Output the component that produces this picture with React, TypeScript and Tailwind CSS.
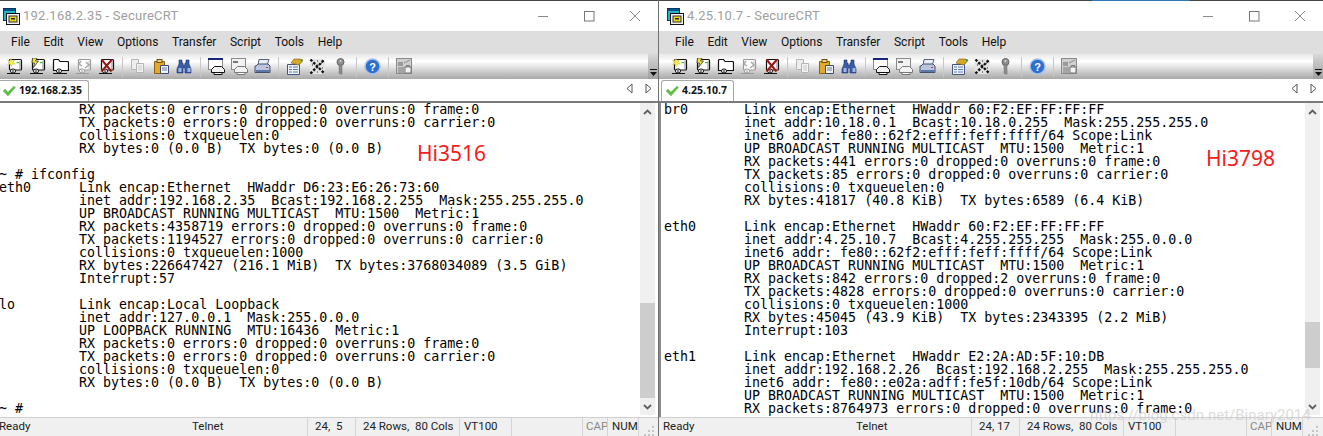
import React from "react";

const mono = "font-['DejaVu_Sans_Mono',monospace]";

const leftRows = [
  "          RX packets:0 errors:0 dropped:0 overruns:0 frame:0",
  "          TX packets:0 errors:0 dropped:0 overruns:0 carrier:0",
  "          collisions:0 txqueuelen:0",
  "          RX bytes:0 (0.0 B)  TX bytes:0 (0.0 B)",
  "",
  "~ # ifconfig",
  "eth0      Link encap:Ethernet  HWaddr D6:23:E6:26:73:60",
  "          inet addr:192.168.2.35  Bcast:192.168.2.255  Mask:255.255.255.0",
  "          UP BROADCAST RUNNING MULTICAST  MTU:1500  Metric:1",
  "          RX packets:4358719 errors:0 dropped:0 overruns:0 frame:0",
  "          TX packets:1194527 errors:0 dropped:0 overruns:0 carrier:0",
  "          collisions:0 txqueuelen:1000",
  "          RX bytes:226647427 (216.1 MiB)  TX bytes:3768034089 (3.5 GiB)",
  "          Interrupt:57",
  "",
  "lo        Link encap:Local Loopback",
  "          inet addr:127.0.0.1  Mask:255.0.0.0",
  "          UP LOOPBACK RUNNING  MTU:16436  Metric:1",
  "          RX packets:0 errors:0 dropped:0 overruns:0 frame:0",
  "          TX packets:0 errors:0 dropped:0 overruns:0 carrier:0",
  "          collisions:0 txqueuelen:0",
  "          RX bytes:0 (0.0 B)  TX bytes:0 (0.0 B)",
  "",
  "~ #",
];

const rightRows = [
  "br0       Link encap:Ethernet  HWaddr 60:F2:EF:FF:FF:FF",
  "          inet addr:10.18.0.1  Bcast:10.18.0.255  Mask:255.255.255.0",
  "          inet6 addr: fe80::62f2:efff:feff:ffff/64 Scope:Link",
  "          UP BROADCAST RUNNING MULTICAST  MTU:1500  Metric:1",
  "          RX packets:441 errors:0 dropped:0 overruns:0 frame:0",
  "          TX packets:85 errors:0 dropped:0 overruns:0 carrier:0",
  "          collisions:0 txqueuelen:0",
  "          RX bytes:41817 (40.8 KiB)  TX bytes:6589 (6.4 KiB)",
  "",
  "eth0      Link encap:Ethernet  HWaddr 60:F2:EF:FF:FF:FF",
  "          inet addr:4.25.10.7  Bcast:4.255.255.255  Mask:255.0.0.0",
  "          inet6 addr: fe80::62f2:efff:feff:ffff/64 Scope:Link",
  "          UP BROADCAST RUNNING MULTICAST  MTU:1500  Metric:1",
  "          RX packets:842 errors:0 dropped:2 overruns:0 frame:0",
  "          TX packets:4828 errors:0 dropped:0 overruns:0 carrier:0",
  "          collisions:0 txqueuelen:1000",
  "          RX bytes:45045 (43.9 KiB)  TX bytes:2343395 (2.2 MiB)",
  "          Interrupt:103",
  "",
  "eth1      Link encap:Ethernet  HWaddr E2:2A:AD:5F:10:DB",
  "          inet addr:192.168.2.26  Bcast:192.168.2.255  Mask:255.255.255.0",
  "          inet6 addr: fe80::e02a:adff:fe5f:10db/64 Scope:Link",
  "          UP BROADCAST RUNNING MULTICAST  MTU:1500  Metric:1",
  "          RX packets:8764973 errors:0 dropped:0 overruns:0 frame:0",
];

function AppIcon() {
  return (
    <svg width="17" height="17" viewBox="0 0 17 17" className="shrink-0">
      <rect x="0.5" y="0.5" width="12" height="12" fill="#22b5c9" stroke="#003a66" />
      <rect x="1" y="1" width="11" height="2" fill="#0b4f8a" />
      <rect x="3.5" y="5.5" width="13" height="11" fill="#f2f2f2" stroke="#111" />
      <rect x="6" y="8" width="8" height="6" fill="#e8d820" stroke="#333" />
      <rect x="8" y="10" width="4" height="1.5" fill="#222" />
    </svg>
  );
}

function Base({ gray }: { gray?: boolean }) {
  const s = gray ? "#9a9a9a" : "#111";
  return (
    <g>
      <rect x="3.5" y="1.5" width="12" height="10.5" rx="1" fill="#fff" stroke={s} strokeWidth="1.2" />
      <path d="M14 3v8" stroke={gray ? "#ccc" : "#9a9a9a"} strokeWidth="1.2" />
      <rect x="4.5" y="11" width="5" height="4" rx="2" fill="#fff" stroke={s} />
      <path d="M7 11.500v3.500M1 15.500h13" stroke={s} />
    </g>
  );
}

const Svg = ({ children }: { children: React.ReactNode }) => (
  <svg width="17" height="17" viewBox="0 0 17 17" className="shrink-0">{children}</svg>
);

const icons: Record<string, React.ReactNode> = {
  star: <Svg><Base /><path d="M5 .5l.8 2.500L8.500 2 7 4.500 9.500 6 6.500 6l-1 2.500L4.500 6 1.500 6.500 3.500 4.500 1.500 2 4 3z" fill="#f6ee50" stroke="#c9c23a" strokeWidth=".5" /><rect x="10.500" y="4" width="2.500" height="1.200" fill="#35c435" /></Svg>,
  bolt: <Svg><Base /><path d="M3.500 0h4.500L6.500 3h3L4.500 9.500 5.500 5H3z" fill="#f6e838" stroke="#222" strokeWidth=".7" /><rect x="11" y="4" width="2.500" height="1.200" fill="#35c435" /></Svg>,
  folder: <Svg><path d="M1.500 12.500v-10q0-1 1-1h4l1.500 2h7.500q1 0 1 1v8z" fill="#fff" stroke="#111" strokeWidth="1.200" /><rect x="4.500" y="11" width="5" height="4" rx="2" fill="#fff" stroke="#111" /><path d="M7 11.500v3.500M1 15.500h14" stroke="#111" /></Svg>,
  grayS: <Svg><Base gray /><path d="M6 3l-2 3 3 2M11 4l3 3-4 3" fill="none" stroke="#a8a8a8" strokeWidth="1.500" /></Svg>,
  x: <Svg><Base /><path d="M3.500 1.500l10 12M14 1.500l-10.500 12" stroke="#a01515" strokeWidth="2" /></Svg>,
  copy: <Svg><path d="M1.500 1.500h7v10h-7z" fill="#eee" stroke="#b5b5b5" /><path d="M6.500 5.500h7v9h-7z" fill="#f4f4f4" stroke="#b5b5b5" /><path d="M8 8h4M8 10h4M8 12h4" stroke="#c8c8c8" /></Svg>,
  paste: <Svg><path d="M1.500 3.500h10v12h-10z" fill="#e2a92c" stroke="#8a6414" /><rect x="4" y="1.500" width="5" height="3" fill="#f0d070" stroke="#6a5010" /><path d="M7.500 7.500h8v8h-8z" fill="#eef3fb" stroke="#3a4a72" /><path d="M9 10h5M9 12h5" stroke="#6a7ca8" /></Svg>,
  binoc: <Svg><path d="M3 2h3v3h1v2h2V5h1V2h3v4l2 5v4h-6v-5H7v5H1v-4l2-5z" fill="#3a5da8" stroke="#1d2f66" strokeWidth=".6" /><rect x="2.500" y="10" width="3" height="4" fill="#9db8e8" /><rect x="11.500" y="10" width="3" height="4" fill="#9db8e8" /></Svg>,
  winP: <Svg><rect x=".5" y=".5" width="14" height="11" fill="#fff" stroke="#8a8a8a" /><rect x="0" y="0" width="15" height="2" fill="#17247a" /><path d="M6.500 8.500h7l3 3v3h-13v-3z" fill="#f2f2f2" stroke="#111" /><path d="M6 14.500h8v2H6z" fill="#fff" stroke="#111" /></Svg>,
  winG: <Svg><rect x=".5" y=".5" width="14" height="11" fill="#f2f2f2" stroke="#8a8a8a" /><rect x="2" y="3" width="5" height="2" fill="#777" /><path d="M6.500 8.500h7l3 3v3h-13v-3z" fill="#f2f2f2" stroke="#777" /><path d="M6 14.500h8v2H6z" fill="#fff" stroke="#777" /></Svg>,
  printer: <Svg><path d="M5 1.500h10l-2 6H4z" fill="#e9eef7" stroke="#55617c" /><path d="M2 8l2-2h10l2 2v6.500H1V8z" fill="#b8c6df" stroke="#44506c" /><rect x="2" y="12" width="14" height="2" fill="#5d78a8" /><rect x="12" y="9" width="2" height="1" fill="#d33" /></Svg>,
  prop: <Svg><path d="M1.500 6.500h12v10h-12z" fill="#eef3fb" stroke="#40557f" /><path d="M3 9h3M7 9h5M3 11.500h3M7 11.500h5M3 14h3M7 14h5" stroke="#5a78a8" /><path d="M5 5l3-4h6l3 1-2 3-3 2-3-1z" fill="#d7a92a" stroke="#7c5c10" strokeWidth=".6" /><path d="M14 1l3 1-1 2z" fill="#2f9a3a" /></Svg>,
  tools: <Svg><path d="M1 4L4 1h9l3 3v9l-3 3H4l-3-3z" fill="#e4e4e4" /><path d="M1.500 15.500L15.500 1.500M1.500 1.500l14 14" stroke="#111" strokeWidth="2.400" strokeDasharray="2.500 1.500" /><path d="M3 7h1M5 11h1M12 5h1M13 10h1M8 3h1M8 14h1" stroke="#222" strokeWidth="1.200" /></Svg>,
  key: <Svg><circle cx="8.500" cy="4" r="3.500" fill="#8f8f8f" stroke="#666" /><path d="M7 7h3v9H8l-1-1v-2h1v-1H7z" fill="#8f8f8f" stroke="#666" strokeWidth=".5" /><circle cx="8.500" cy="3" r="1" fill="#ddd" /></Svg>,
  help: <Svg><circle cx="8.500" cy="8.500" r="7.500" fill="#2c6fd0" stroke="#a5c2ea" strokeWidth="1.500" /><text x="8.500" y="12.500" textAnchor="middle" fontSize="11" fontWeight="700" fill="#fff" fontFamily="Liberation Sans">?</text></Svg>,
  lock: <Svg><rect x=".5" y=".5" width="15" height="15" fill="#cfcfcf" stroke="#8a8a8a" /><path d="M2 4h5v4H2z" fill="#9a9a9a" /><path d="M8 5l6-3M2 12l5-3" stroke="#8f8f8f" /><rect x="2" y="9" width="6" height="6" fill="#a5a5a5" /><rect x="9" y="9" width="6" height="6" fill="#f4f4f4" stroke="#777" /><path d="M10.500 9V7.500h3V9" fill="none" stroke="#777" /></Svg>,
};

const groups: string[][] = [
  ["star", "bolt", "folder", "grayS", "x"],
  ["copy", "paste", "binoc"],
  ["winP", "winG", "printer"],
  ["prop", "tools", "key"],
  ["help"],
  ["lock"],
];

function Toolbar({ inset }: { inset: string }) {
  return (
    <div className={`relative flex h-[25px] shrink-0 items-center bg-gradient-to-b from-[#e8e8e8] via-[#ffffff] via-30% to-[#a9a9a9] ${inset}`}>
      {groups.map((g, i) => (
        <React.Fragment key={i}>
          {i > 0 && <div className="mx-[7px] h-[20px] w-px bg-[#c8c8c8]" />}
          <div className="flex gap-[6px]">
            {g.map((n) => (
              <span key={n} className="block h-[17px] w-[17px]">{icons[n]}</span>
            ))}
          </div>
        </React.Fragment>
      ))}
      <div className="absolute right-0 top-0 flex h-full w-[10px] items-end justify-center bg-gradient-to-b from-[#d8d8d8] to-[#a0a0a0] pb-[3px]">
        <svg width="7" height="7" viewBox="0 0 7 7"><path d="M0 0h7v1H0zM0 3h7L3.500 7z" fill="#111" /></svg>
      </div>
    </div>
  );
}

function Scrollbar({ top, height }: { top: number; height: number }) {
  return (
    <div className="relative mb-[2px] mr-[3px] w-[15px] shrink-0 bg-[#f0f0f0]">
      <svg className="absolute left-[3px] top-[6px]" width="9" height="6" viewBox="0 0 9 6"><path d="M1 5L4.500 1.500 8 5" fill="none" stroke="#606060" strokeWidth="1.800" /></svg>
      <div className="absolute left-0 w-[15px] bg-[#cdcdcd]" style={{ top, height }} />
      <svg className="absolute bottom-[5px] left-[3px]" width="9" height="6" viewBox="0 0 9 6"><path d="M1 1L4.500 4.500 8 1" fill="none" stroke="#606060" strokeWidth="1.800" /></svg>
    </div>
  );
}

function Grip() {
  return (
    <svg width="11" height="11" viewBox="0 0 11 11" className="ml-[5px] mt-[6px] shrink-0">
      <path d="M8 1h2v2H8zM8 5h2v2H8zM4 5h2v2H4zM8 9h2v2H8zM4 9h2v2H4zM0 9h2v2H0z" fill="#c4c4c4" />
    </svg>
  );
}

type PaneProps = {
  title: string; rows: string[]; pos: string; thumbTop: number; thumbH: number;
  label: string; labelLeft: number; labelTop: number;
  wide: string; titleInset: string; menuInset: string; toolInset: string; tabInset: string;
  statusInset: string; termClass: string; textLeft: number;
};

function Pane(p: PaneProps) {
  const menu = ["File", "Edit", "View", "Options", "Transfer", "Script", "Tools", "Help"];
  return (
    <div className={`relative flex h-full shrink-0 flex-col ${p.wide}`}>
      <div className={`flex h-[31px] shrink-0 items-center border-t border-[#444] bg-white ${p.titleInset}`}>
        <AppIcon />
        <span className="ml-[3px] whitespace-pre font-['Roboto',sans-serif] text-[13px] tracking-[0.25px] text-[#a0a0a0]">{p.title} - SecureCRT</span>
        <div className="ml-auto flex h-full items-center pr-[17px]">
          <svg width="12" height="12" viewBox="0 0 12 12" className="mr-[34px]"><path d="M1 6.500h10" stroke="#8a8a8a" /></svg>
          <svg width="12" height="12" viewBox="0 0 12 12" className="mr-[34px]"><rect x="1.500" y="1.500" width="9.500" height="9.500" fill="none" stroke="#777" /></svg>
          <svg width="12" height="12" viewBox="0 0 12 12"><path d="M1 1l10 10M11 1L1 11" stroke="#8a8a8a" /></svg>
        </div>
      </div>
      <div className={`flex h-[23px] shrink-0 items-center gap-[13.600px] bg-[#dedede] pb-[1px] font-['Roboto',sans-serif] text-[12px] text-[#111] ${p.menuInset}`}>
        {menu.map((m) => <span key={m}>{m}</span>)}
      </div>
      <Toolbar inset={p.toolInset} />
      <div className={`relative flex h-[22px] shrink-0 items-end bg-white ${p.tabInset}`}>
        <div className="flex h-[21px] items-center rounded-t-[3px] border border-b-0 border-[#a8a8a8] bg-white pl-[3px] pr-[6px] font-['Open_Sans',sans-serif] text-[10.500px] font-bold text-[#111]">
          <svg width="14" height="12" viewBox="0 0 14 12" className="mr-[3px]"><path d="M1 6l2-2 3 3 6-6 1.500 1.500L6 11z" fill="#5cc043" stroke="#7fbf70" strokeWidth=".5" /></svg>
          {p.title}
        </div>
        <div className="absolute right-[6px] top-[4px] flex gap-[12px]">
          <svg width="7" height="11" viewBox="0 0 7 11"><path d="M6 1v9L1 5.500z" fill="#fff" stroke="#555" /></svg>
          <svg width="7" height="11" viewBox="0 0 7 11"><path d="M1 1v9l5-4.500z" fill="#fff" stroke="#555" /></svg>
        </div>
      </div>
      <div className="h-[2px] shrink-0 bg-[#7a7a7a]" />
      <div className={`relative flex h-[314px] shrink-0 overflow-hidden bg-white ${p.termClass}`}>
        <div className="min-w-0 flex-1 overflow-hidden">
          <pre
            className={`${mono} text-[13.300px] leading-[13px] text-black`}
            style={{ marginLeft: p.textLeft }}
          >
            {p.rows.join("\n")}
          </pre>
        </div>
        <Scrollbar top={p.thumbTop} height={p.thumbH} />
        <span
          className="absolute font-['Noto_Sans',sans-serif] text-[21px] leading-none text-[#f5201c]"
          style={{ left: p.labelLeft, top: p.labelTop }}
        >
          {p.label}
        </span>
      </div>
      <div className={`flex h-[19px] shrink-0 items-center whitespace-pre border-t border-[#cfcfcf] bg-[#f0f0f0] font-['Roboto',sans-serif] text-[11.500px] text-[#222] ${p.statusInset}`}>
        <span className="w-[193px] shrink-0">Ready</span>
        <span className="w-[115px] shrink-0">Telnet</span>
        <span className="flex h-full w-[48px] shrink-0 items-center border-l border-[#d4d4d4] pl-[7px]">{p.pos}</span>
        <span className="flex h-full w-[104px] shrink-0 items-center border-l border-[#d4d4d4] pl-[7px]">24 Rows,  80 Cols</span>
        <span className="flex h-full w-[52px] shrink-0 items-center border-l border-[#d4d4d4] pl-[4px]">VT100</span>
        <span className="h-full w-[71px] shrink-0 border-l border-[#d4d4d4]" />
        <span className="flex h-full w-[25px] shrink-0 items-center border-l border-[#d4d4d4] pl-[3px] text-[#8a8a8a]">CAP</span>
        <span className="flex h-full w-[32px] shrink-0 items-center border-l border-r border-[#d4d4d4] pl-[4px]">NUM</span>
        <Grip />
      </div>
    </div>
  );
}

export default function App() {
  return (
    <div className="relative flex h-[436px] w-[1323px] overflow-hidden bg-white">
      <Pane
        title="192.168.2.35" rows={leftRows} pos="24,  5" thumbTop={200} thumbH={95}
        label="Hi3516" labelLeft={417} labelTop={40}
        wide="w-[658px]" titleInset="pl-[3px]" menuInset="pl-[11px]" toolInset="pl-[6px]" tabInset="-ml-[2px]"
        statusInset="-ml-[1px]" termClass="" textLeft={-1}
      />
      <Pane
        title="4.25.10.7" rows={rightRows} pos="24, 17" thumbTop={219} thumbH={46}
        label="Hi3798" labelLeft={545} labelTop={45}
        wide="w-[665px] border-l border-[#707070]" titleInset="pl-[8px]" menuInset="pl-[16px]" toolInset="pl-[12px]" tabInset="pl-[2px]"
        statusInset="pl-[4px]" termClass="border-l-2 border-[#8a8a8a]" textLeft={3}
      />
      <div className="absolute left-[1092px] top-0 h-px w-[98px] bg-[#2f78b8]" />
      <span className="absolute left-[1090px] top-[408px] font-['Roboto',sans-serif] text-[15px] leading-none text-[#c8c8c8] opacity-60">
        https://blog.csdn.net/Binary2014
      </span>
    </div>
  );
}
